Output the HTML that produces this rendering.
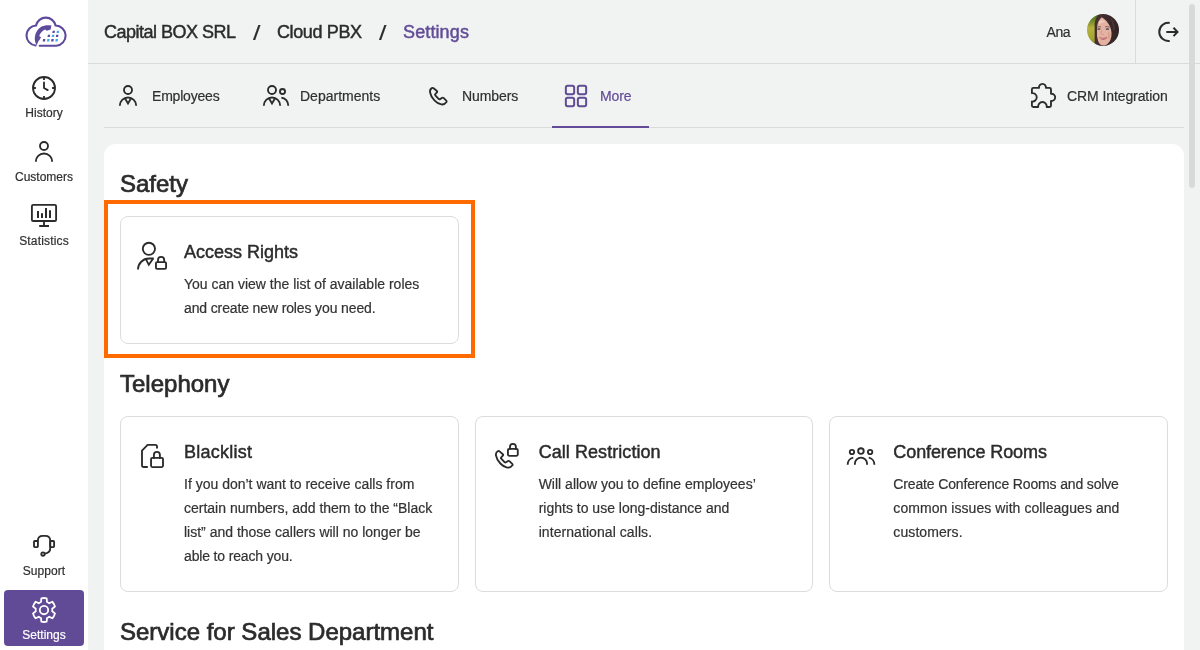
<!DOCTYPE html>
<html lang="en">
<head>
<meta charset="utf-8">
<title>Settings</title>
<style>
*{box-sizing:border-box;margin:0;padding:0}
html,body{width:1200px;height:650px;overflow:hidden}
body{background:#f1f3f2;font-family:"Liberation Sans",Arial,sans-serif;color:#2f2f2f;position:relative;will-change:transform}
svg{display:block;overflow:visible}
.ic{fill:none;stroke:#2b2b2b;stroke-width:1.85;stroke-linecap:round;stroke-linejoin:round}
/* sidebar */
.side{position:absolute;left:0;top:0;width:88px;height:650px;background:#fff}
.logo{position:absolute;left:20px;top:12px;width:52px;height:40px}
.nav{position:absolute;left:4px;width:80px;height:56px;border-radius:4px;text-align:center}
.nav svg{position:absolute;left:0;top:0;width:80px;height:56px}
.nav span{position:absolute;left:0;right:0;top:37px;font-size:12px;line-height:16px;color:#2f2f2f;-webkit-text-stroke:.2px #2f2f2f}
.nav.on{background:#614b97}
.nav.on span{color:#fff;-webkit-text-stroke-color:#fff}
.nav.on .ic{stroke:#fff}
/* header */
.head{position:absolute;left:88px;top:0;width:1112px;height:64px;border-bottom:1px solid #d9dbda}
.crumb{position:absolute;top:20px;font-size:18px;line-height:24px;white-space:nowrap;color:#2b2b2b;-webkit-text-stroke:.45px #2b2b2b}
.crumb.sl{font-size:21px;top:21px;transform:scaleX(1.28);transform-origin:0 50%;-webkit-text-stroke:.1px #2b2b2b}
.crumb.p{color:#614b97;-webkit-text-stroke:.45px #614b97}
.user{position:absolute;left:958.5px;top:22px;font-size:14px;line-height:20px;color:#2f2f2f;-webkit-text-stroke:.2px #2f2f2f}
.ava{position:absolute;left:999px;top:14px;width:32px;height:32px}
.vdiv{position:absolute;left:1047px;top:0;width:1px;height:63px;background:#d9dbda}
.out{position:absolute;left:1060px;top:12px;width:40px;height:40px}
/* tabs */
.tabs{position:absolute;left:104px;top:64px;width:1080px;height:64px;border-bottom:1px solid #d9dbda}
.tab{position:absolute;top:0;height:64px}
.tab svg{position:absolute;left:0;top:0;width:48px;height:64px}
.tab span{position:absolute;top:22px;font-size:14px;line-height:20px;white-space:nowrap;color:#2f2f2f;-webkit-text-stroke:.2px #2f2f2f}
.tab.on span{color:#614b97;-webkit-text-stroke-color:#614b97}
.tab.on .ic{stroke:#614b97}
.tab.on i{position:absolute;left:0;right:0;bottom:0;height:2px;background:#614b97}
/* panel */
.panel{position:absolute;left:104px;top:144px;width:1080px;height:520px;background:#fff;border-radius:12px 12px 0 0}
h2{position:absolute;left:16px;font-size:24px;line-height:32px;font-weight:400;color:#2b2b2b;white-space:nowrap;-webkit-text-stroke:.7px #2b2b2b}
.card{position:absolute;height:128px;width:338.67px;border:1px solid #dcdcdc;border-radius:8px;background:#fff}
.card svg{position:absolute;left:0;top:0;width:62px;height:80px}
.card h3{position:absolute;left:63px;top:23px;font-size:18px;line-height:24px;font-weight:400;color:#2b2b2b;white-space:nowrap;-webkit-text-stroke:.45px #2b2b2b}
.card p{position:absolute;left:63px;top:55px;font-size:14px;line-height:24px;color:#333;white-space:nowrap;-webkit-text-stroke:.2px #333}
.hl{position:absolute;left:0;top:56px;width:371px;height:158px;border:4px solid #ff6a00}
.scroll{position:absolute;left:1189px;top:4px;width:6px;height:184px;border-radius:3px;background:#d9d9d9}
</style>
</head>
<body>
<aside class="side">
  <svg class="logo" viewBox="20 12 52 40">
    <path d="M35.6 45.45A10 10 0 0 1 36.02 25.5A10 10 0 0 1 55.58 25.53A10.1 10.1 0 0 1 56.3 45.7H39.7" fill="none" stroke="#5d4a9c" stroke-width="2.1" stroke-linecap="round"/>
    <path d="M51.4 25.5L50.6 29.4L46.8 30.8L45 29.5C42.6 30.6 40.3 33 39.2 36L41 37.2L39.8 39.6C38.5 40.8 37.6 42.8 36.9 45.3C35.3 43.3 34.6 40.2 34.8 37.2C35.2 33 37.5 29.4 40.5 27.3C43.5 25.4 47.6 25.1 51.4 25.5Z" fill="#5d4a9c"/>
    <g fill="#5d4a9c"><path d="M52.7 30.8h2.3l-.4 2.3h-2.3z"/><path d="M47.9 34.8h2.3l-.4 2.3h-2.3z"/><path d="M56.2 34.8h2.3l-.4 2.3h-2.3z"/><path d="M43.1 39.1h2.3l-.4 2.3h-2.3z"/><path d="M51.5 39.1h2.3l-.4 2.3h-2.3z"/></g>
    <g fill="#41a7ee"><path d="M56.9 30.8h2.3l-.4 2.3h-2.3z"/><path d="M52.1 34.8h2.3l-.4 2.3h-2.3z"/><path d="M47.3 39.1h2.3l-.4 2.3h-2.3z"/><path d="M55.7 39.1h2.3l-.4 2.3h-2.3z"/></g>
  </svg>
  <a class="nav" style="top:68px"><svg class="ic" viewBox="4 68 80 56"><circle cx="44" cy="88" r="11"/><path d="M44 77.6v2.3M44 96.1v2.3M33.6 88h2.3M52.1 88h2.3" stroke-linecap="butt"/><path d="M44 82.4V88l3.7 2.1"/></svg><span>History</span></a>
  <a class="nav" style="top:132px"><svg class="ic" viewBox="4 132 80 56"><circle cx="44" cy="146" r="4"/><path d="M35.8 161.7a8.2 8.2 0 0 1 16.4 0" stroke-linecap="butt"/></svg><span>Customers</span></a>
  <a class="nav" style="top:196px"><svg class="ic" viewBox="4 196 80 56"><rect x="31.9" y="204.85" width="24.2" height="16.1" rx="1.3"/><path d="M38 211.1V217.9M42 213.2V217.9M46 208.1V217.9M50 210.2V217.9" stroke-width="2" stroke-linecap="butt"/><path d="M44 221.5V226M39.2 226H49" stroke-linecap="butt"/></svg><span style="letter-spacing:.16px">Statistics</span></a>
  <a class="nav" style="top:526px"><svg class="ic" viewBox="4 526 80 56"><rect x="34" y="541" width="3.9" height="6.1" rx=".8"/><rect x="50.2" y="541" width="3.9" height="6.1" rx=".8"/><path d="M37.9 541V540.6Q37.9 535.9 42.8 535.9H45.3Q50.2 535.9 50.2 540.6V548.6Q50.2 553 44.8 553.7"/><circle cx="43" cy="554" r="1.7"/></svg><span style="letter-spacing:.06px">Support</span></a>
  <a class="nav on" style="top:590px"><svg class="ic" viewBox="4 590 80 56"><path transform="translate(44 0) scale(.955 1) translate(-44 0)" d="M40.88 601.88L41.20 598.33A12.0 12.0 0 0 1 46.80 598.33L47.12 601.88A8.7 8.7 0 0 1 49.48 603.24L52.70 601.74A12.0 12.0 0 0 1 55.51 606.59L52.59 608.64A8.7 8.7 0 0 1 52.59 611.36L55.51 613.41A12.0 12.0 0 0 1 52.70 618.26L49.48 616.76A8.7 8.7 0 0 1 47.12 618.12L46.80 621.67A12.0 12.0 0 0 1 41.20 621.67L40.88 618.12A8.7 8.7 0 0 1 38.52 616.76L35.30 618.26A12.0 12.0 0 0 1 32.49 613.41L35.41 611.36A8.7 8.7 0 0 1 35.41 608.64L32.49 606.59A12.0 12.0 0 0 1 35.30 601.74L38.52 603.24A8.7 8.7 0 0 1 40.88 601.88Z"/><circle cx="44" cy="610" r="4.2"/></svg><span>Settings</span></a>
</aside>
<header class="head">
  <div class="crumb" style="left:16px;letter-spacing:-.5px">Capital BOX SRL</div>
  <div class="crumb sl" style="left:165px">/</div>
  <div class="crumb" style="left:189px;letter-spacing:-.38px">Cloud PBX</div>
  <div class="crumb sl" style="left:291px">/</div>
  <div class="crumb p" style="left:315px;letter-spacing:.12px">Settings</div>
  <div class="user" style="letter-spacing:-.45px">Ana</div>
  <svg class="ava" viewBox="0 0 32 32">
    <defs><clipPath id="avc"><circle cx="16" cy="16" r="16"/></clipPath><filter id="avb" x="-20%" y="-20%" width="140%" height="140%"><feGaussianBlur stdDeviation="0.7"/></filter>
    <linearGradient id="avg" x1="0" y1="0" x2="0" y2="1"><stop offset="0" stop-color="#3f5f1c"/><stop offset=".22" stop-color="#5f7d22"/><stop offset=".45" stop-color="#b7b23e"/><stop offset=".7" stop-color="#a5a535"/><stop offset="1" stop-color="#6f8428"/></linearGradient>
    <linearGradient id="avh" x1="0" y1="0" x2="1" y2="0"><stop offset="0" stop-color="#4a3231"/><stop offset=".55" stop-color="#3a2829"/><stop offset="1" stop-color="#2e2023"/></linearGradient></defs>
    <g clip-path="url(#avc)"><g filter="url(#avb)">
      <rect x="-4" y="-4" width="40" height="40" fill="url(#avg)"/>
      <path d="M7.8 36V9C8.5 3 12 -3 20 -3H36V36Z" fill="url(#avh)"/>
      <path d="M24 5C26 8 27 12 27 16" stroke="#6b4f47" stroke-width="1.6" fill="none" opacity=".35"/>
      <path d="M10 13C10.3 8.5 12.5 5 14.8 3.2C18 5 21.3 8.5 23 12.5C24.6 16.5 25.2 21 23.6 25.5C22.3 28.8 19.5 31.5 16.5 31.5C13.5 31.5 11.6 29.5 10.6 26C9.7 22.5 9.8 17 10 13Z" fill="#e3b2a2"/>
      <path d="M12 7.5C13.5 5.8 16 6 18.5 8C16 8.2 13.8 9 12 10.5Z" fill="#efcbbd"/>
      <path d="M21.5 17C23 19 23.3 23 22 26C21 24 21 20 21.5 17Z" fill="#d39485" opacity=".8"/>
      <path d="M10.4 13.3C11.4 12.5 12.8 12.5 13.8 13M18.2 13C19.6 12.3 21.4 12.5 22.6 13.4" stroke="#5a3c38" stroke-width=".8" fill="none"/>
      <ellipse cx="11.9" cy="15" rx="1.6" ry=".85" fill="#3c4254"/><ellipse cx="20.4" cy="15" rx="1.8" ry=".85" fill="#3c4254"/>
      <path d="M14.6 16.5C14.2 18.3 13.8 19.5 14.3 20.3C15 20.8 16.2 20.7 17 20.2" stroke="#c98e80" stroke-width=".7" fill="none"/>
      <path d="M12 23.2C14.5 24 17.8 23.8 20.2 22.8C19.2 26.3 14.4 26.9 12 23.2Z" fill="#b34d58"/>
      <path d="M13.2 24.1C15 24.5 17.4 24.3 19 23.7" stroke="#f1dcd6" stroke-width=".5" fill="none"/>
      <path d="M7.8 9C8.3 7 9.4 5.3 10.8 4.2C10.2 8 9.9 14 9.9 20C9.9 25 11 29 13.6 32.5H7.8Z" fill="#452f2e"/>
    </g></g>
  </svg>
  <div class="vdiv"></div>
  <svg class="out ic" style="stroke-width:2" viewBox="1148 12 40 40"><path d="M1169.7 22.9A9.1 9.1 0 1 0 1169.7 40.9M1166.3 31.9H1177.3M1173.5 27.7L1177.5 31.9L1173.5 36.1" stroke-linecap="butt" stroke-linejoin="miter"/></svg>
</header>
<nav class="tabs">
  <a class="tab" style="left:0;width:132px"><svg class="ic" style="left:0" viewBox="104 64 48 64"><circle cx="128" cy="90" r="4"/><path d="M119.8 105.7a8.2 8.2 0 0 1 16.4 0" stroke-linecap="butt"/><path d="M125.2 98.7L128 103.4L130.8 98.7" stroke-linejoin="miter"/></svg><span style="left:48px;letter-spacing:-.2px">Employees</span></a>
  <a class="tab" style="left:148px;width:145px"><svg class="ic" style="left:0" viewBox="252 64 48 64"><circle cx="272" cy="90" r="4"/><path d="M263.8 105.7a8.2 8.2 0 0 1 16.4 0" stroke-linecap="butt"/><path d="M269.2 98.7L272 103.4L274.8 98.7" stroke-linejoin="miter"/><circle cx="282.5" cy="91.5" r="2.55"/><path d="M281.4 97.7A6.9 8 0 0 1 288.3 105.7" stroke-linecap="butt"/></svg><span style="left:48px">Departments</span></a>
  <a class="tab" style="left:310px;width:121px"><svg class="ic" style="left:0" viewBox="414 64 48 64"><path d="M433.6 88.2L436.9 91Q437.6 91.65 436.9 92.4L435.3 94.1Q434.7 94.75 435.3 95.4L438.6 98.9Q439.3 99.55 440.1 99.1L442.2 97.8Q442.9 97.4 443.5 97.9L446.3 100.6Q447 101.3 446.5 102.1C445.2 104 443.3 104.7 441.3 104.4C437 103.8 431 98 430.1 92.5C429.7 90.6 430.3 89 431.8 88.1Q432.8 87.5 433.6 88.2Z"/></svg><span style="left:48px;letter-spacing:-.08px">Numbers</span></a>
  <a class="tab on" style="left:448px;width:97px"><svg class="ic" style="left:0;stroke-width:2" viewBox="552 64 48 64"><rect x="565.85" y="85.85" width="8.3" height="8.3" rx="1.7"/><rect x="577.85" y="85.85" width="8.3" height="8.3" rx="1.7"/><rect x="565.85" y="97.85" width="8.3" height="8.3" rx="1.7"/><rect x="577.85" y="97.85" width="8.3" height="8.3" rx="1.7"/></svg><span style="left:48px;letter-spacing:-.1px">More</span><i></i></a>
  <a class="tab" style="left:915px;width:165px"><svg class="ic" style="left:0" viewBox="1019 64 48 64"><path d="M1033.4 87.9H1039A3.5 3.5 0 1 1 1045.9 87.9H1049.5Q1051 87.9 1051 89.4V93.8A3.6 3.6 0 1 1 1051 100.9V105.5Q1051 107 1049.5 107H1046.7A4.3 4.3 0 1 0 1038.2 107H1033.4Q1031.9 107 1031.9 105.5V101.5A4.2 4.2 0 1 0 1031.9 93.2V89.4Q1031.9 87.9 1033.4 87.9Z"/></svg><span style="left:48px;letter-spacing:-.09px">CRM Integration</span></a>
</nav>
<main class="panel">
  <h2 style="top:24px">Safety</h2>
  <div class="hl"></div>
  <section class="card" style="left:16px;top:72px"><svg class="ic" viewBox="121 217 62 80"><circle cx="148.9" cy="248.8" r="6.1"/><path d="M138 269.5A11 11 0 0 1 149 258.5H153.7" stroke-linecap="butt"/><path d="M146 259.3L148.8 264.8L152.8 258.9" stroke-linejoin="miter"/><rect x="155.95" y="262.05" width="10.1" height="6.85" rx="1.2"/><path d="M158 262V260a3.1 3.1 0 0 1 6.2 0V262"/></svg><h3>Access Rights</h3><p>You can view the list of available roles<br><span style="letter-spacing:-.13px">and create new roles you need.</span></p></section>
  <h2 style="top:224px">Telephony</h2>
  <section class="card" style="left:16px;top:272px;height:176px"><svg class="ic" viewBox="121 417 62 80"><path d="M157 448.5V446.6Q157 444.9 155.3 444.9H147.6L142 450.7V465.2Q142 467 143.8 467H147.8" stroke-linecap="butt"/><rect x="151.05" y="457.9" width="11.95" height="9.15" rx="1.2"/><path d="M153.9 458V454.9a3 3 0 0 1 6 0V458"/></svg><h3 style="letter-spacing:.24px">Blacklist</h3><p>If you don’t want to receive calls from<br>certain numbers, add them to the “Black<br>list” and those callers will no longer be<br><span style="letter-spacing:-.15px">able to reach you.</span></p></section>
  <section class="card" style="left:370.67px;top:272px;height:176px"><svg class="ic" viewBox="475.67 417 62 80"><path transform="translate(65.6 363.2)" d="M433.6 88.2L436.9 91Q437.6 91.65 436.9 92.4L435.3 94.1Q434.7 94.75 435.3 95.4L438.6 98.9Q439.3 99.55 440.1 99.1L442.2 97.8Q442.9 97.4 443.5 97.9L446.3 100.6Q447 101.3 446.5 102.1C445.2 104 443.3 104.7 441.3 104.4C437 103.8 431 98 430.1 92.5C429.7 90.6 430.3 89 431.8 88.1Q432.8 87.5 433.6 88.2Z"/><rect x="507.6" y="448.85" width="9.85" height="6.95" rx="1.2"/><path d="M509.65 449V446.85a2.95 2.95 0 0 1 5.9 0V449"/></svg><h3 style="letter-spacing:.06px">Call Restriction</h3><p>Will allow you to define employees’<br>rights to use long-distance and<br><span style="letter-spacing:.07px">international calls.</span></p></section>
  <section class="card" style="left:725.33px;top:272px;height:176px"><svg class="ic" viewBox="830.33 417 62 80"><circle cx="861.25" cy="451" r="2.8"/><path d="M855.2 464.8V463.7a6.1 6.1 0 0 1 12.2 0V464.8" stroke-linecap="butt"/><circle cx="852.3" cy="452" r="2.2"/><circle cx="870.45" cy="452" r="2.2"/><path d="M848 464.7A6.5 7 0 0 1 853.6 457.7M869.1 457.7A6.5 7 0 0 1 874.7 464.7" stroke-linecap="butt"/></svg><h3 style="letter-spacing:-.1px">Conference Rooms</h3><p><span style="letter-spacing:-.15px">Create Conference Rooms and solve</span><br><span style="letter-spacing:.06px">common issues with colleagues and</span><br><span style="letter-spacing:.09px">customers.</span></p></section>
  <h2 style="top:472px">Service for Sales Department</h2>
</main>
<div class="scroll"></div>
</body>
</html>
